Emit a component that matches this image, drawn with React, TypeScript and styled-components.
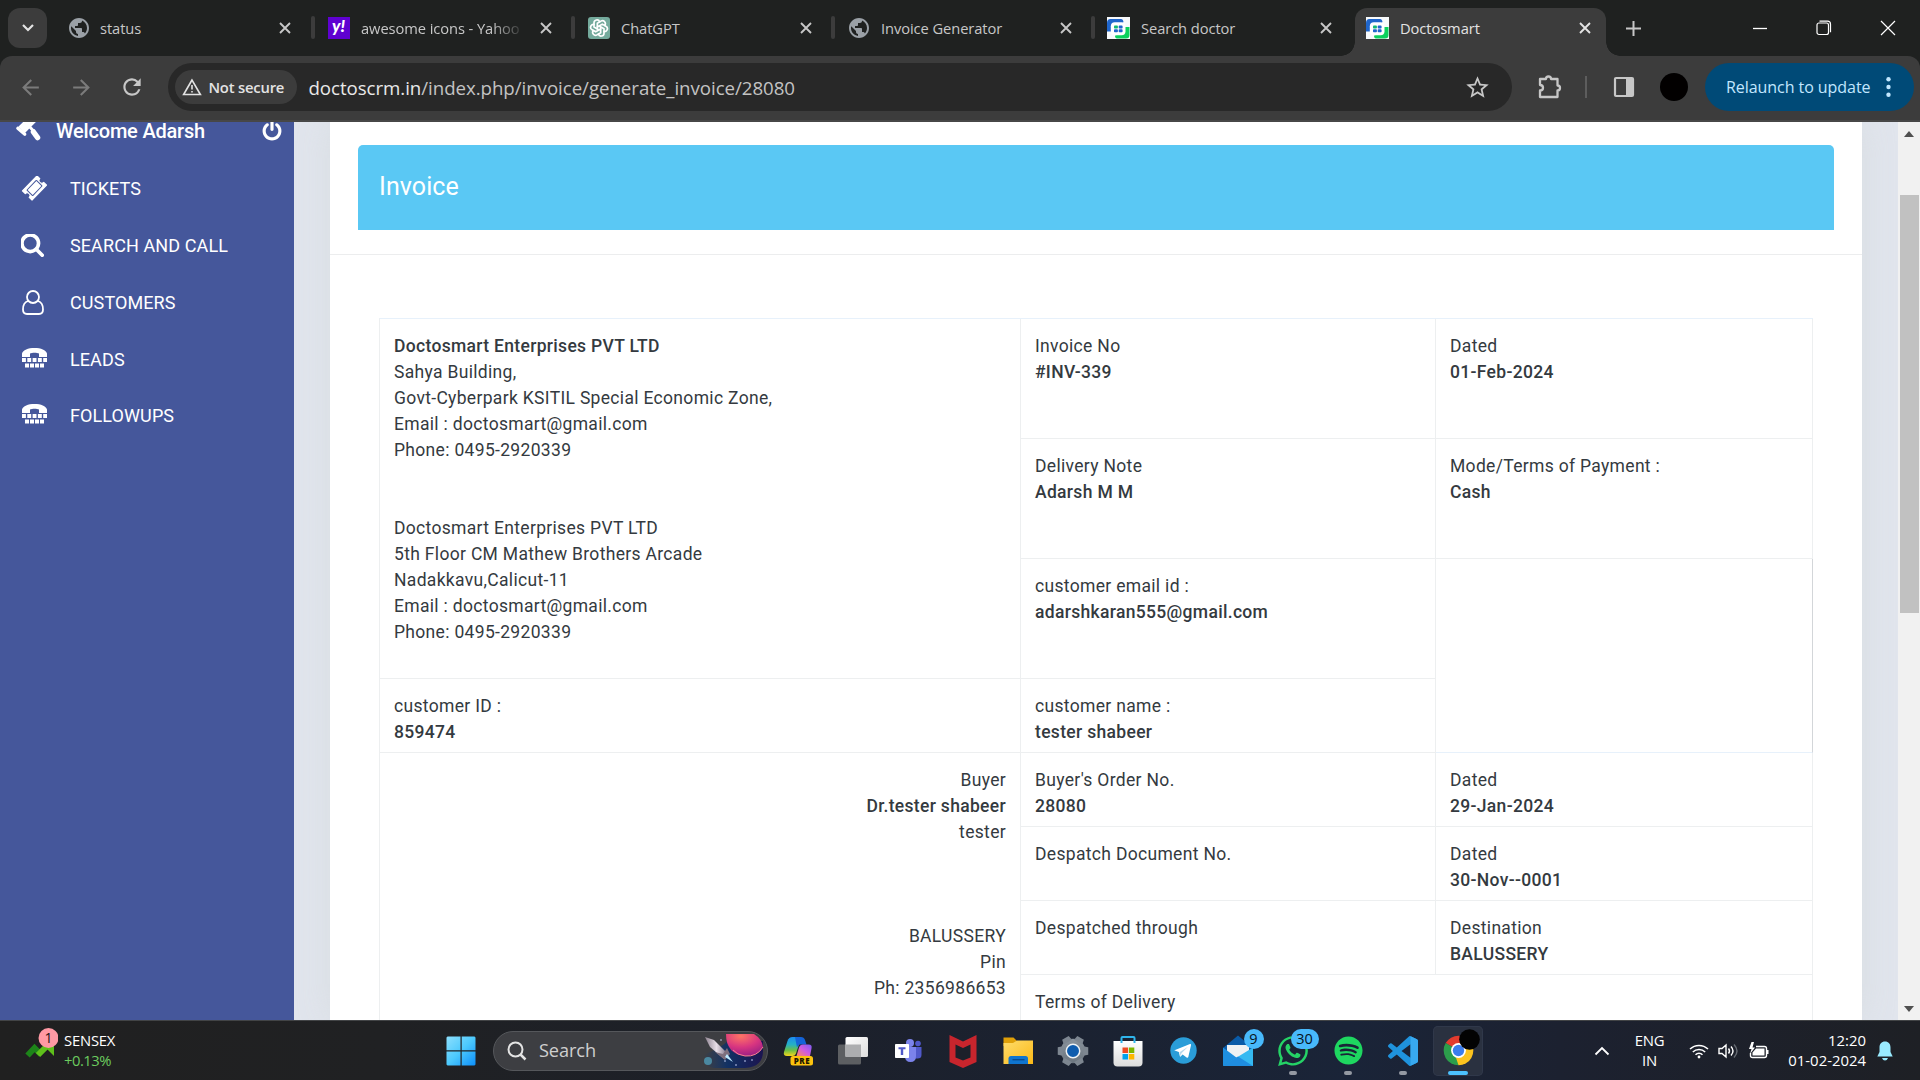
import React from 'react';
import styled, { createGlobalStyle, css } from 'styled-components';
import { MdArrowBack, MdArrowForward, MdRefresh, MdStarBorder, MdPublic } from 'react-icons/md';
import { FaSpotify, FaWhatsapp } from 'react-icons/fa';
import { TbBrandOpenai } from 'react-icons/tb';

const GlobalStyle = createGlobalStyle`
  * { box-sizing: border-box; }
  html, body { margin: 0; padding: 0; overflow: hidden; }
  body { width: 1920px; height: 1080px; font-family: Roboto, sans-serif; }
  svg { display: block; flex: none; }
`;

const uiFont = css`font-family: "Open Sans", "Noto Sans", sans-serif;`;

const Screen = styled.div`
  width: 1920px;
  height: 1080px;
  display: flex;
  flex-direction: column;
  background: #1f2120;
`;

/* ---------- browser tabs ---------- */

const TabStrip = styled.div`
  height: 56px;
  flex: none;
  display: flex;
  padding-left: 8px;
  background: #1f2120;
  ${uiFont}
`;

const TabSearch = styled.div`
  width: 39px;
  height: 40px;
  margin: 8px 8px 0 0;
  border-radius: 12px;
  background: #3c3c3c;
  display: flex;
  align-items: center;
  justify-content: center;
`;

const Tab = styled.div<{ $width: number; $active?: boolean }>`
  position: relative;
  width: ${p => p.$width}px;
  height: ${p => (p.$active ? 48 : 40)}px;
  margin-top: 8px;
  padding: 0 12px 0 ${p => (p.$active ? 11 : 12)}px;
  padding-bottom: ${p => (p.$active ? 8 : 0)}px;
  display: flex;
  align-items: center;
  color: ${p => (p.$active ? '#e3e3e3' : '#c7c7c7')};
  background: ${p => (p.$active ? '#3c3c3c' : 'transparent')};
  border-radius: 12px 12px 0 0;
  ${p => p.$active && css`
    &::before, &::after {
      content: '';
      position: absolute;
      bottom: 0;
      width: 14px;
      height: 14px;
    }
    &::before { left: -14px; background: radial-gradient(circle at 0 0, transparent 13.5px, #3c3c3c 14px); }
    &::after { right: -14px; background: radial-gradient(circle at 100% 0, transparent 13.5px, #3c3c3c 14px); }
  `}
`;

const TabTitle = styled.span<{ $fade?: boolean; $gap?: number }>`
  width: 168px;
  margin-left: ${p => p.$gap ?? 11}px;
  margin-right: 11px;
  overflow: hidden;
  white-space: nowrap;
  font-size: 14.7px;
  line-height: 22px;
  letter-spacing: -0.08px;
  ${p => p.$fade && css`width: 162px; margin-right: 17px; mask-image: linear-gradient(90deg, #000 130px, transparent 164px);`}
`;

const TabDivider = styled.div`
  width: 4px;
  height: 23px;
  margin-top: 16px;
  border-radius: 2px;
  background: #3c3c3c;
`;

const Favicon = styled.div`
  width: 23px;
  height: 23px;
  flex: none;
  display: flex;
  align-items: center;
  justify-content: center;
`;

const YahooMark = styled.div`
  width: 22px;
  height: 22px;
  background: #5f01d1;
  color: #fff;
  font: italic 900 17px/18px Lato, sans-serif;
  text-align: center;
`;

const GptMark = styled.div`
  width: 22px;
  height: 22px;
  border-radius: 3px;
  background: #74aa9c;
  color: #fff;
  display: flex;
  align-items: center;
  justify-content: center;
`;

const NewTab = styled.div`
  width: 54px;
  display: flex;
  align-items: center;
  justify-content: center;
`;

const WindowButtons = styled.div`
  margin-left: auto;
  display: flex;
  align-items: center;
  & > svg { margin: 0 24px; }
`;

const CloseIcon = () => (
  <svg width="12" height="12" viewBox="0 0 12 12" stroke="currentColor" strokeWidth="1.9">
    <path d="M1 1l10 10M11 1L1 11" />
  </svg>
);

const DoctoLogo = () => (
  <svg width="23" height="22" viewBox="0 0 23 22">
    <rect width="23" height="22" fill="#f8fafc" />
    <path d="M0 14.500V6q0-4 3.500-4H14q2 0 2.500 3L14 8H5v6.500z" fill="#1f66cc" />
    <path d="M22.500 10v8q0 3.500-3.500 3.500h-9q-2 0-2-3L17 16V10z" fill="#0bd15d" />
    <rect x="3.800" y="5.300" width="14.700" height="13" rx="4" fill="#fff" />
    <rect x="7" y="8.600" width="3.900" height="3" rx="0.800" fill="#10b877" />
    <rect x="11.700" y="8.600" width="3.900" height="3" rx="0.800" fill="#1f66cc" />
    <rect x="7" y="12.300" width="3.900" height="3" rx="0.800" fill="#1f66cc" />
    <rect x="11.700" y="12.300" width="3.900" height="3" rx="0.800" fill="#1f66cc" />
  </svg>
);

const Globe = () => <MdPublic size={24} color="#9aa0a6" />;

/* ---------- browser toolbar ---------- */

const Toolbar = styled.div`
  height: 66px;
  flex: none;
  display: flex;
  align-items: center;
  padding: 0 6px 2px 17px;
  background: #3c3c3c;
  border-bottom: 2px solid #474747;
  border-radius: 12px 12px 0 0;
  color: #c7c7c7;
  ${uiFont}
`;

const NavButton = styled.div<{ $dim?: boolean }>`
  width: 28px;
  margin-right: 22.5px;
  display: flex;
  justify-content: center;
  color: ${p => (p.$dim ? '#7b7b7b' : '#c7c7c7')};
`;

const Omnibox = styled.div`
  width: 1344px;
  height: 48px;
  margin-right: 25px;
  display: flex;
  align-items: center;
  padding: 0 21px 0 7px;
  border-radius: 24px;
  background: #282828;
`;

const SecurityChip = styled.div`
  width: 122px;
  height: 34px;
  display: flex;
  align-items: center;
  gap: 6px;
  padding-left: 7px;
  border-radius: 17px;
  background: #3c3c3c;
  color: #e3e3e3;
  white-space: nowrap;
  font-size: 14.800px;
  font-weight: 600;
  letter-spacing: -0.2px;
`;

const Url = styled.span`
  flex: 1;
  margin-left: 11px;
  padding-top: 1px;
  font-size: 18.700px;
  line-height: 28px;
  letter-spacing: -0.05px;
  color: #c3c3c3;
  b { font-weight: 400; color: #e8e8e8; }
`;

const ToolbarDivider = styled.div`
  width: 2px;
  height: 22px;
  margin: 0 26px 0 22px;
  background: #5d5d5d;
`;

const Avatar = styled.div`
  width: 28px;
  height: 28px;
  margin: 0 17px 0 25px;
  border-radius: 50%;
  background: #020000;
`;

const Relaunch = styled.div`
  width: 209px;
  height: 48px;
  display: flex;
  align-items: center;
  justify-content: space-between;
  padding: 0 23px 0 21px;
  border-radius: 24px;
  background: #004a77;
  color: #c2e7ff;
  font-size: 16px;
  white-space: nowrap;
  letter-spacing: -0.06px;
`;

/* ---------- page ---------- */

const Page = styled.div`
  height: 898px;
  flex: none;
  display: flex;
  background: #e1e5ed;
  overflow: hidden;
`;

const Sidebar = styled.aside`
  width: 294px;
  flex: none;
  background: #45579b;
  color: #fff;
  display: flex;
  flex-direction: column;
`;

const Welcome = styled.div`
  height: 38px;
  margin: -10px 0 10px;
  flex: none;
  display: flex;
  align-items: center;
  padding: 0 11px 0 15px;
  font-size: 20px;
  line-height: 18px;
  font-weight: 500;
  letter-spacing: -0.2px;
  & > svg:last-child { margin-left: auto; }
`;

const WelcomeName = styled.span`
  margin-left: 14px;
  white-space: nowrap;
`;

const MenuItem = styled.div<{ $height?: number }>`
  height: ${p => p.$height ?? 57}px;
  display: flex;
  align-items: center;
  padding-left: 21px;
  font-size: 18px;
  line-height: 24px;
  letter-spacing: 0.1px;
`;

const MenuIcon = styled.span`
  width: 28px;
  margin-right: 21px;
  flex: none;
`;

const Card = styled.main`
  width: 1532px;
  margin-left: 36px;
  flex: none;
  background: #fff;
  box-shadow: 0 0 32px rgba(210, 216, 218, 0.65);
`;

const CardHead = styled.div`
  height: 133px;
  padding: 23px 28px 0;
  border-bottom: 1px solid #ecedee;
`;

const Banner = styled.div`
  height: 85px;
  padding: 27px 21px;
  border-radius: 5px 5px 0 0;
  background: #5ac8f4;
  color: #fff;
  font-size: 25px;
  line-height: 30px;
  letter-spacing: 0.1px;
`;

const Invoice = styled.div`
  margin: 63px 0 0 49px;
  width: 1434px;
  display: grid;
  grid-template-columns: 641px 415px 377px;
  grid-template-rows: repeat(3, 120px) repeat(4, 74px) 120px;
  border-top: 1px solid #e7f1fb;
  border-left: 1px solid #edeff0;
  color: #343a40;
  font-size: 17.5px;
  line-height: 26px;
  letter-spacing: 0.32px;
`;

const Cell = styled.div<{ $rows?: number; $cols?: number; $right?: boolean; $edge?: string; $base?: string }>`
  grid-row: span ${p => p.$rows ?? 1};
  grid-column: span ${p => p.$cols ?? 1};
  padding: 14px 14px 0;
  border-right: 1px solid ${p => p.$edge ?? '#edeff0'};
  border-bottom: 1px solid ${p => p.$base ?? '#edeff0'};
  text-align: ${p => (p.$right ? 'right' : 'left')};
  overflow: hidden;
`;

const Line = styled.div<{ $strong?: boolean }>`
  height: 26px;
  white-space: nowrap;
  font-weight: ${p => (p.$strong ? 500 : 400)};
`;

const Field = ({ label, value }: { label: string; value?: string }) => (
  <Cell>
    <Line>{label}</Line>
    {value && <Line $strong>{value}</Line>}
  </Cell>
);

const Scrollbar = styled.div`
  width: 22px;
  margin-left: auto;
  flex: none;
  display: flex;
  flex-direction: column;
  align-items: center;
  background: #f1f1f1;
  position: relative;
  padding: 9px 0 8px;
`;

const Thumb = styled.div`
  width: 19px;
  height: 418px;
  margin: 58px 0 auto;
  background: #c1c1c1;
`;

const Arrow = styled.div<{ $down?: boolean }>`
  border: 5.5px solid transparent;
  border-width: ${p => (p.$down ? '6px 5.5px 0' : '0 5.5px 6px')};
  border-${p => (p.$down ? 'top' : 'bottom')}-color: #505050;
`;

const Gavel = () => (
  <svg width="27" height="28" viewBox="0 0 27 28" fill="none" stroke="#fff">
    <path d="M6.500 13L20-.5" strokeWidth="9" />
    <path d="M2.800 11.300l7 6" strokeWidth="3.200" strokeLinecap="round" />
    <path d="M13 8l6 6.500" strokeWidth="3" />
    <path d="M18.500 15l4 5.500" strokeWidth="5.500" strokeLinecap="round" />
  </svg>
);

const Power = () => (
  <svg width="22" height="22" viewBox="0 0 1792 1792" fill="#fff">
    <path d="M1664 896q0 156-61 298t-164 245-245 164-298 61-298-61-245-164-164-245-61-298q0-182 80.500-343t226.500-270q43-32 95.500-25t83.500 50q32 42 24.500 94.500t-49.500 84.500q-98 74-151.500 181t-53.500 228q0 104 40.500 198.500t109.500 163.500 163.500 109.500 198.500 40.500 198.500-40.500 163.500-109.500 109.500-163.500 40.500-198.500q0-121-53.500-228t-151.500-181q-42-32-49.500-84.500t24.500-94.500q31-43 84-50t95 25q146 109 226.500 270t80.500 343zm-640-768v640q0 52-38 90t-90 38-90-38-38-90v-640q0-52 38-90t90-38 90 38 38 90z" />
  </svg>
);

const Ticket = () => (
  <svg width="26" height="26" viewBox="0 0 26 26">
    <g transform="translate(13.500 12) rotate(-46)">
      <path d="M-10.500-6.700h21v4a2.700 2.700 0 0 0 0 5.400v4h-21v-4a2.700 2.700 0 0 0 0-5.400z" fill="#fff" stroke="#fff" strokeLinejoin="round" />
      <rect x="-6.800" y="-4" width="13.600" height="8" rx="0.500" fill="none" stroke="#45579b" />
    </g>
  </svg>
);

const SearchGlyph = () => (
  <svg width="24" height="24" viewBox="64 64 1664 1664" fill="#fff">
    <path d="M1152 704q0-185-131.500-316.500t-316.500-131.500-316.500 131.500-131.500 316.500 131.500 316.500 316.500 131.500 316.500-131.500 131.500-316.500zm512 832q0 52-38 90t-90 38q-54 0-90-38l-343-342q-179 124-399 124-143 0-273.500-55.500t-225-150-150-225-55.500-273.500 55.500-273.500 150-225 225-150 273.500-55.500 273.500 55.500 225 150 150 225 55.500 273.500q0 220-124 399l343 343q37 37 37 90z" />
  </svg>
);

const UserGlyph = () => (
  <svg width="24" height="26" viewBox="0 0 24 26" fill="none" stroke="#fff" strokeWidth="1.800">
    <circle cx="12" cy="7" r="6" />
    <path d="M7 11C3.500 12 2 15.500 2 19.500c0 3 1.500 4.500 4 4.500h12c2.500 0 4-1.500 4-4.500 0-4-1.500-7.500-5-8.500" />
  </svg>
);

const Tty = () => (
  <svg width="26" height="26" viewBox="0 0 26 26" fill="#fff">
    <path d="M1 10V6.500C2 3 7 1 13.500 1S25 3 26 6.500V10h-8V6.500c-2-1-7-1-9 0V10z" />
    {[1, 6.300, 11.600, 16.900, 22.200].map(x => <rect key={x} x={x} y="11" width="3.900" height="4" />)}
    {[4, 9, 14, 19].map(x => <rect key={x} x={x} y="16.500" width="4" height="4" />)}
  </svg>
);

/* ---------- taskbar ---------- */

const Taskbar = styled.div`
  height: 60px;
  flex: none;
  display: flex;
  align-items: center;
  border-top: 1px solid #424446;
  background: linear-gradient(90deg, #202020 0, #202123 380px, #1c202a 800px, #1a2438 1350px, #1c2130 1560px, #1e2025 1920px);
  color: #fff;
  ${uiFont}
`;

const Widget = styled.div`
  position: relative;
  width: 446px;
  padding: 0 0 2px 64px;
  font-size: 14.800px;
  line-height: 20px;
  letter-spacing: -0.2px;
  span { display: block; color: #6ccb5f; letter-spacing: -0.5px; }
`;

const WidgetIcon = styled.div`
  position: absolute;
  left: 24px;
  top: -3px;
`;

const Slot = styled.div<{ $active?: boolean }>`
  position: relative;
  width: ${p => (p.$active ? 50 : 55)}px;
  height: 50px;
  margin: ${p => (p.$active ? '0 2.5px' : '0')};
  border-radius: 5px;
  display: flex;
  align-items: center;
  justify-content: center;
  ${p => p.$active && css`background: #2a3140; box-shadow: inset 0 0 0 1px #30384a;`}
  svg { overflow: visible; }
`;

const Running = styled.div<{ $wide?: boolean }>`
  position: absolute;
  bottom: 1px;
  width: ${p => (p.$wide ? 20 : 8)}px;
  height: 4px;
  border-radius: 2px;
  background: ${p => (p.$wide ? '#4cc2ff' : '#9499a2')};
`;

const Badge = styled.div<{ $width: number; $left: number }>`
  position: absolute;
  top: 3px;
  left: ${p => p.$left}px;
  width: ${p => p.$width}px;
  height: 20px;
  border-radius: 10px;
  background: #48b9fb;
  color: #07131c;
  font-size: 14.500px;
  line-height: 20px;
  text-align: center;
`;

const SearchBox = styled.div`
  width: 275px;
  height: 40px;
  margin: 0 2.5px 0 17px;
  display: flex;
  align-items: center;
  padding: 0 3px 0 13px;
  border: 1px solid #55575b;
  border-radius: 20px;
  background: #3d3e42;
  color: #cfcfcf;
  font-size: 18.200px;
  line-height: 24px;
  letter-spacing: -0.1px;
  & > span { flex: 1; margin-left: 12px; padding-bottom: 1px; }
`;

const Tray = styled.div`
  margin-left: auto;
  display: flex;
  align-items: center;
  padding-right: 27px;
  font-size: 14.900px;
  line-height: 20px;
  & > svg + svg { margin-left: 9px; }
  & > div + svg:last-child { margin-left: 11px; }
`;

const TrayText = styled.div<{ $right?: boolean; $width: number }>`
  width: ${p => p.$width}px;
  padding-bottom: 2px;
  text-align: ${p => (p.$right ? 'right' : 'center')};
  white-space: nowrap;
  letter-spacing: ${p => (p.$right ? 0 : -0.3)}px;
`;

const SpaceArt = () => (
  <svg width="62" height="36" viewBox="0 0 62 36">
    <defs>
      <radialGradient id="planet" cx="0.4" cy="0.1" r="1">
        <stop offset="0" stopColor="#ff7564" /><stop offset="0.5" stopColor="#d83580" /><stop offset="1" stopColor="#8d1b85" />
      </radialGradient>
      <linearGradient id="sky" x1="0" x2="1"><stop offset="0" stopColor="#17386d" stopOpacity="0" /><stop offset="0.4" stopColor="#123163" /><stop offset="1" stopColor="#1b1450" /></linearGradient>
      <linearGradient id="rocket" x1="0" x2="1"><stop offset="0" stopColor="#8d8290" /><stop offset="0.5" stopColor="#e9dfe8" /><stop offset="1" stopColor="#776c80" /></linearGradient>
    </defs>
    <path d="M2 22Q20 14 26 8h35v10q0 16-18 17H12Q2 34 2 22z" fill="url(#sky)" />
    <path d="M24 1h28q8 5 9 13-6 10-18 9Q24 21 24 1z" fill="url(#planet)" />
    <path d="M61 14q-6 10-18 9-8-1-12-6" stroke="#f98390" fill="none" />
    <path d="M3 4l9 3 14 14-4 5L8 14z" fill="url(#rocket)" />
    <path d="M13 19l8 2 4-6 3 6-5 6z" fill="#7e6f7d" />
    <path d="M25 21l6 8-8-5z" fill="#bde9ff" />
    <circle cx="6" cy="28" r="4" fill="#4b88a0" />
    {[[19, 7], [23, 28], [50, 27], [43, 28], [34, 32]].map(([x, y]) => <circle key={x} cx={x} cy={y} r="0.8" fill="#cfd8ff" />)}
  </svg>
);

const WindowsLogo = () => (
  <svg width="30" height="30" viewBox="0 0 30 30">
    <defs><linearGradient id="win" gradientUnits="userSpaceOnUse" x1="0" y1="0" x2="30" y2="30"><stop offset="0" stopColor="#8fe0fd" /><stop offset="0.5" stopColor="#4cc9fd" /><stop offset="1" stopColor="#0a8dfb" /></linearGradient></defs>
    <path fill="url(#win)" d="M1.500.5h13v13.800H.5V1.500zM15.700.5h12.800l1 1v12.800H15.700zM.5 15.500h14v14h-13l-1-1zM15.700 15.500h13.800v13l-1 1H15.700z" />
  </svg>
);

const Copilot = () => (
  <svg width="30" height="30" viewBox="0 0 30 30">
    <defs>
      <linearGradient id="cpL" x1="0" y1="0" x2="0" y2="1"><stop offset="0" stopColor="#1c8cf0" /><stop offset="0.4" stopColor="#25b0c5" /><stop offset="0.7" stopColor="#6cbf44" /><stop offset="1" stopColor="#f5d51c" /></linearGradient>
      <linearGradient id="cpR" x1="1" y1="0" x2="0" y2="1"><stop offset="0" stopColor="#7a5cf0" /><stop offset="0.5" stopColor="#d05be0" /><stop offset="1" stopColor="#ff8a58" /></linearGradient>
    </defs>
    <path d="M4.500 5Q5.800 1 9.500 1H18l-1 4.500-4 12Q12 20 9.500 20H4Q0 20 1 16z" fill="url(#cpL)" />
    <path d="M12 1h6q3 0 4 3l1.500 4.500H17q-2 0-3 3z" fill="#1463d8" />
    <path d="M16 11.500Q17 8.500 20 8.500h5.500q4 0 3 4L27 20H13.500z" fill="url(#cpR)" />
    <rect x="7.500" y="20" width="22.500" height="9.500" rx="2.500" fill="#fcc20e" />
    <text x="19" y="27.700" textAnchor="middle" fontFamily="Open Sans, sans-serif" fontWeight="800" fontSize="8" fill="#1d1700" letterSpacing="0.6">PRE</text>
  </svg>
);

const TaskView = () => (
  <svg width="32" height="30" viewBox="0 0 32 30">
    <defs><linearGradient id="tv" x1="0" y1="0" x2="1" y2="1"><stop offset="0" stopColor="#fff" /><stop offset="1" stopColor="#ddd" /></linearGradient></defs>
    <rect x="1" y="8.500" width="23" height="20" rx="1.500" fill="#5d5f62" />
    <rect x="8.500" y="1" width="22.500" height="20" rx="1.500" fill="url(#tv)" />
    <rect x="8.500" y="8.500" width="15.500" height="12.500" fill="#adaeb0" />
  </svg>
);

const Teams = () => (
  <svg width="28" height="26" viewBox="0 0 28 26">
    <circle cx="16" cy="5" r="4" fill="#7b83eb" /><circle cx="24" cy="5.500" r="2.800" fill="#5059c9" />
    <path d="M18 9h9.500v8q0 3.500-4 3.500H18z" fill="#5059c9" />
    <path d="M11 9h11v9q0 6-5.500 6T11 18z" fill="#7b83eb" />
    <rect x="1" y="6" width="14" height="14" rx="0.800" fill="#fff" />
    <path d="M4.500 9.200h7v2H9.200V17H6.800v-5.800H4.500z" fill="#5059c9" />
  </svg>
);

const McAfee = () => (
  <svg width="28" height="34" viewBox="0 -1 28 34">
    <path d="M.5 0L14 6.500 27.500 0v27L14 33 .5 27z" fill="#c8252d" />
    <path d="M6.500 9.500l7.500 3.500 7.500-3.500v13L14 25.500l-7.500-3z" fill="#1c202a" />
  </svg>
);

const Folder = () => (
  <svg width="31" height="30" viewBox="0 0 31 30">
    <defs><linearGradient id="fold" x1="0" y1="0" x2="1" y2="1"><stop offset="0" stopColor="#ffdc6b" /><stop offset="1" stopColor="#fbb917" /></linearGradient></defs>
    <path d="M.5 1.500h10l3 3V10H.5z" fill="#e0a008" />
    <path d="M.5 7H10l4-2.500h16v23.500H.5z" fill="url(#fold)" />
    <path d="M5.500 28v-5.500Q5.500 20 8 20h14.500q2.500 0 2.500 2.500V28z" fill="#0f75cf" />
    <path d="M9.500 23.700h12" stroke="#084b90" strokeWidth="1.400" />
  </svg>
);

const Settings = () => (
  <svg width="32" height="32" viewBox="0 0 30 30">
    <defs><linearGradient id="gear" gradientUnits="userSpaceOnUse" x1="0" y1="0" x2="0" y2="30"><stop offset="0" stopColor="#8f98a1" /><stop offset="1" stopColor="#66707a" /></linearGradient></defs>
    <circle cx="15" cy="15" r="11.500" fill="url(#gear)" />
    {[30, 90, 150, 210, 270, 330].map(a => <path key={a} fill="#7d8690" d="M10.500 5.500l1-4.800h7l1 4.800z" transform={`rotate(${a} 15 15)`} />)}
    <circle cx="15" cy="15" r="6.300" fill="#0e5cae" stroke="#eef2f5" strokeWidth="1.400" />
  </svg>
);

const Store = () => (
  <svg width="30" height="34" viewBox="0 0 30 34">
    <defs><linearGradient id="bag" x1="0" y1="0" x2="0" y2="1"><stop offset="0" stopColor="#fff" /><stop offset="1" stopColor="#dcdcdc" /></linearGradient></defs>
    <path d="M.5 7h29v21.500q0 4-4 4h-21q-4 0-4-4z" fill="url(#bag)" />
    <path d="M8.500 9V4q0-1 1-1h11q1 0 1 1v5" fill="none" stroke="#2fb5ec" strokeWidth="2" />
    <path d="M9.500 13.500H15V19H9.500z" fill="#ef4b23" /><path d="M15.800 13.500h5.500V19h-5.500z" fill="#7db700" />
    <path d="M9.500 20H15v5.500H9.500z" fill="#00a2ed" /><path d="M15.800 20h5.500v5.500h-5.500z" fill="#fdb700" />
  </svg>
);

const Telegram = () => (
  <svg width="27" height="27" viewBox="0 0 27 27">
    <circle cx="13.500" cy="13.500" r="13.200" fill="#2a9dd8" />
    <path d="M4.500 13.300L20 7q1.300-.3 1 1.200L18.300 20q-.5 1.300-1.700.5l-4-3-2 2q-.6.600-.8-.6l-1-4-4-1.300q-1-.1-.3-.3z" fill="#fff" />
    <path d="M9.500 15.200l8.500-5.500-6.500 6.500-.8 3z" fill="#b7d9ec" />
  </svg>
);

const Mail = () => (
  <svg width="30" height="31" viewBox="0 0 30 31">
    <path d="M0 13L15 .5 30 13v4L15 24 0 17z" fill="#0a5ba8" />
    <path d="M4 10h22v8l-11 8-11-8z" fill="#eef1f3" />
    <path d="M0 12.500L14 23 0 31z" fill="#1e8fe0" /><path d="M30 12.500L0 31h30z" fill="#35b9f1" /><path d="M0 31l15-9.500L30 31z" fill="#1f8de0" />
  </svg>
);

const VsCode = () => (
  <svg width="30" height="30" viewBox="0 0 24 24">
    <path fill="#1f93dd" d="M23.150 2.587L18.210.21a1.494 1.494 0 0 0-1.705.29l-9.460 8.630-4.120-3.128a.999.999 0 0 0-1.276.057L.327 7.261A1 1 0 0 0 .326 8.740L3.899 12 .326 15.260a1 1 0 0 0 .001 1.479L1.650 17.940a.999.999 0 0 0 1.276.057l4.120-3.128 9.460 8.630a1.492 1.492 0 0 0 1.704.29l4.942-2.377A1.500 1.500 0 0 0 24 20.060V3.939a1.500 1.500 0 0 0-.85-1.352zm-5.146 14.861L10.826 12l7.178-5.448v10.896z" />
    <path fill="#38a9f0" d="M18 .2l5.150 2.387Q24 3 24 3.939V20.060q0 .9-.85 1.350L18 23.800z" />
  </svg>
);

const Chrome = () => (
  <svg width="31" height="31" viewBox="0 0 48 48">
    <path d="M24 24L4.100 12.500A23 23 0 0 1 43.900 12.500z" fill="#e33b2e" />
    <path d="M24 24L43.900 12.500A23 23 0 0 1 24 47z" fill="#fcc31e" />
    <path d="M24 24v23A23 23 0 0 1 4.100 12.500z" fill="#2c9e4b" />
    <path d="M24 13h20l-9 17z" fill="#fcc31e" /><path d="M34 29L24 47l-4-12z" fill="#fcc31e" /><path d="M4.100 12.500L14 30l10 5-10-6z" fill="#2c9e4b" />
    <circle cx="24" cy="24" r="11.500" fill="#fff" /><circle cx="24" cy="24" r="8.800" fill="#3b7ded" />
    <circle cx="41" cy="7" r="16" fill="#030303" />
  </svg>
);

const tabs = [
  { title: 'status', icon: <Globe />, width: 256, gap: 10 },
  { title: 'awesome icons - Yahoo', icon: <YahooMark>y!</YahooMark>, width: 256, fade: true },
  { title: 'ChatGPT', icon: <GptMark><TbBrandOpenai size={20} /></GptMark>, width: 256 },
  { title: 'Invoice Generator', icon: <Globe />, width: 256 },
  { title: 'Search doctor', icon: <DoctoLogo />, width: 260, last: true },
];

export default function App() {
  return (
    <Screen>
      <GlobalStyle />
      <TabStrip>
        <TabSearch>
          <svg width="12" height="8" viewBox="0 0 12 8" fill="none" stroke="#e3e3e3" strokeWidth="2.200"><path d="M1 1l5 5 5-5" /></svg>
        </TabSearch>
        {tabs.map(t => (
          <React.Fragment key={t.title}>
            <Tab $width={t.width}>
              <Favicon>{t.icon}</Favicon>
              <TabTitle $fade={t.fade} $gap={t.gap}>{t.title}</TabTitle>
              <CloseIcon />
            </Tab>
            {!t.last && <TabDivider />}
          </React.Fragment>
        ))}
        <Tab $width={251} $active>
          <Favicon><DoctoLogo /></Favicon>
          <TabTitle>Doctosmart</TabTitle>
          <CloseIcon />
        </Tab>
        <NewTab>
          <svg width="15" height="15" viewBox="0 0 15 15" stroke="#c7c7c7" strokeWidth="2"><path d="M7.500 0v15M0 7.500h15" /></svg>
        </NewTab>
        <WindowButtons>
          <svg width="16" height="16" viewBox="0 0 16 16" stroke="#fff"><path d="M1 8.500h14" strokeWidth="1.300" /></svg>
          <svg width="16" height="16" viewBox="0 0 16 16" fill="none" stroke="#fff" strokeWidth="1.200"><rect x="1" y="3" width="11.500" height="11.500" rx="2" /><path d="M3.500 1.200h8q3 0 3 3v8" /></svg>
          <svg width="16" height="16" viewBox="0 0 16 16" stroke="#fff" strokeWidth="1.200"><path d="M1 1l14 14M15 1L1 15" /></svg>
        </WindowButtons>
      </TabStrip>

      <Toolbar>
        <NavButton $dim><MdArrowBack size={25} /></NavButton>
        <NavButton $dim><MdArrowForward size={25} /></NavButton>
        <NavButton><MdRefresh size={26} /></NavButton>
        <Omnibox>
          <SecurityChip>
            <svg width="20" height="18" viewBox="0 0 20 18" fill="none" stroke="#e3e3e3" strokeWidth="1.600"><path d="M10 2L1.600 16.500h16.800zM10 7v4.500M10 13v1.600" /></svg>
            Not secure
          </SecurityChip>
          <Url><b>doctoscrm.in</b>/index.php/invoice/generate_invoice/28080</Url>
          <MdStarBorder size={27} />
        </Omnibox>
        <svg width="26" height="26" viewBox="0 0 26 26" fill="none" stroke="#c7c7c7" strokeWidth="2.300" strokeLinejoin="round">
          <path d="M3 5h6a2.500 2.500 0 0 1 5 0h6.500v6.500a2.500 2.500 0 0 1 0 5v6.500H3v-6.500c4 0 4-5.500 0-5.500z" />
        </svg>
        <ToolbarDivider />
        <svg width="22" height="22" viewBox="0 0 22 22"><rect x="2" y="2" width="18" height="18" rx="1" fill="none" stroke="#c7c7c7" strokeWidth="2.200" /><path d="M13 2h7v18h-7z" fill="#c7c7c7" /></svg>
        <Avatar />
        <Relaunch>
          Relaunch to update
          <svg width="5" height="20" viewBox="0 0 5 20" fill="#c2e7ff"><circle cx="2.500" cy="2.300" r="2.200" /><circle cx="2.500" cy="10" r="2.200" /><circle cx="2.500" cy="17.700" r="2.200" /></svg>
        </Relaunch>
      </Toolbar>

      <Page>
        <Sidebar>
          <Welcome><Gavel /><WelcomeName>Welcome Adarsh</WelcomeName><Power /></Welcome>
          <MenuItem><MenuIcon><Ticket /></MenuIcon>TICKETS</MenuItem>
          <MenuItem><MenuIcon><SearchGlyph /></MenuIcon>SEARCH AND CALL</MenuItem>
          <MenuItem><MenuIcon><UserGlyph /></MenuIcon>CUSTOMERS</MenuItem>
          <MenuItem><MenuIcon><Tty /></MenuIcon>LEADS</MenuItem>
          <MenuItem $height={56}><MenuIcon><Tty /></MenuIcon>FOLLOWUPS</MenuItem>
        </Sidebar>
        <Card>
          <CardHead><Banner>Invoice</Banner></CardHead>
          <Invoice>
            <Cell $rows={3}>
              <Line $strong>Doctosmart Enterprises PVT LTD</Line>
              <Line>Sahya Building,</Line>
              <Line>Govt-Cyberpark KSITIL Special Economic Zone,</Line>
              <Line>Email : doctosmart@gmail.com</Line>
              <Line>Phone: 0495-2920339</Line>
              <Line /><Line />
              <Line>Doctosmart Enterprises PVT LTD</Line>
              <Line>5th Floor CM Mathew Brothers Arcade</Line>
              <Line>Nadakkavu,Calicut-11</Line>
              <Line>Email : doctosmart@gmail.com</Line>
              <Line>Phone: 0495-2920339</Line>
            </Cell>
            <Field label="Invoice No" value="#INV-339" />
            <Field label="Dated" value="01-Feb-2024" />
            <Field label="Delivery Note" value="Adarsh M M" />
            <Field label="Mode/Terms of Payment :" value="Cash" />
            <Field label="customer email id :" value="adarshkaran555@gmail.com" />
            <Cell $rows={2} $edge="#d3d6d9" $base="#e7f1fb" />
            <Field label="customer ID :" value="859474" />
            <Field label="customer name :" value="tester shabeer" />
            <Cell $rows={4} $right>
              <Line>Buyer</Line>
              <Line $strong>Dr.tester shabeer</Line>
              <Line>tester</Line>
              <Line /><Line /><Line />
              <Line>BALUSSERY</Line>
              <Line>Pin</Line>
              <Line>Ph: 2356986653</Line>
            </Cell>
            <Field label="Buyer's Order No." value="28080" />
            <Field label="Dated" value="29-Jan-2024" />
            <Field label="Despatch Document No." />
            <Field label="Dated" value="30-Nov--0001" />
            <Field label="Despatched through" />
            <Field label="Destination" value="BALUSSERY" />
            <Cell $cols={2}><Line>Terms of Delivery</Line></Cell>
          </Invoice>
        </Card>
        <Scrollbar><Arrow /><Thumb /><Arrow $down /></Scrollbar>
      </Page>

      <Taskbar>
        <Widget>
          <WidgetIcon>
            <svg width="34" height="36" viewBox="0 0 34 36">
              <path d="M3.500 28.500l7-7.500 6.500 6.500" fill="none" stroke="#1d8519" strokeWidth="6" />
              <path d="M14 28l12-12 2 2" fill="none" stroke="#5fc01b" strokeWidth="6" /><path d="M18 17h12v12z" fill="#5fc01b" />
              <circle cx="24.500" cy="11" r="10" fill="#ff99a4" />
              <text x="24.500" y="16" textAnchor="middle" fontSize="14" fill="#1c1214">1</text>
            </svg>
          </WidgetIcon>
          SENSEX<span>+0.13%</span>
        </Widget>
        <WindowsLogo />
        <SearchBox>
          <svg width="20" height="20" viewBox="0 0 20 20" fill="none" stroke="#e4e4e4" strokeWidth="2"><circle cx="8.500" cy="8.500" r="7" /><path d="M13.500 13.500l5 5" strokeWidth="2.500" /></svg>
          <span>Search</span>
          <SpaceArt />
        </SearchBox>
        <Slot><Copilot /></Slot>
        <Slot><TaskView /></Slot>
        <Slot><Teams /></Slot>
        <Slot><McAfee /></Slot>
        <Slot><Folder /></Slot>
        <Slot><Settings /></Slot>
        <Slot><Store /></Slot>
        <Slot><Telegram /></Slot>
        <Slot><Mail /><Badge $width={20} $left={33}>9</Badge></Slot>
        <Slot><FaWhatsapp size={34} color="#25d366" /><Badge $width={28} $left={25}>30</Badge><Running /></Slot>
        <Slot><FaSpotify size={29} color="#1ed760" /><Running /></Slot>
        <Slot><VsCode /><Running /></Slot>
        <Slot $active><Chrome /><Running $wide /></Slot>
        <Tray>
          <svg width="16" height="10" viewBox="0 0 16 10" fill="none" stroke="#fff" strokeWidth="1.800"><path d="M1.500 8.500L8 2l6.500 6.500" /></svg>
          <TrayText $width={79}>ENG<br />IN</TrayText>
          <svg width="20" height="16" viewBox="0 0 20 16" fill="none" stroke="#fff" strokeWidth="1.500"><path d="M1 6a13 13 0 0 1 18 0M3.800 9a9 9 0 0 1 12.400 0M6.500 11.800a5 5 0 0 1 7 0" /><circle cx="10" cy="14" r="1.400" fill="#fff" stroke="none" /></svg>
          <svg width="21" height="18" viewBox="0 0 21 18" fill="none" stroke="#fff" strokeWidth="1.400"><path d="M1 6.500h3L8 3v12l-4-3.500H1zM10.500 6.500q2 2.500 0 5M13 4.500q4 4.500 0 9" /><path d="M16 2.500q6 6.500 0 13" stroke="#666b73" /></svg>
          <svg width="21" height="18" viewBox="0 0 21 18"><path d="M8 4.500h8.500q2 0 2 2v7q0 2-2 2h-12q-2 0-2-2V11" fill="none" stroke="#fff" strokeWidth="1.400" /><path d="M8 6.500h8.500v7h-12v-3zM19 8h1.500v4H19zM3.500 0L1 7h2.500L2 12l5-6.500H4.500L6 0z" fill="#fff" /></svg>
          <TrayText $width={97} $right>12:20<br />01-02-2024</TrayText>
          <svg width="16" height="20" viewBox="0 0 16 20" fill="#99ebff"><path d="M8 .5C4.500.5 2.500 3 2.500 6.500V11L.3 15.500h15.400L13.500 11V6.500C13.500 3 11.500.5 8 .5zM5 17h6q-1 2.500-3 2.500T5 17z" /></svg>
        </Tray>
      </Taskbar>
    </Screen>
  );
}
